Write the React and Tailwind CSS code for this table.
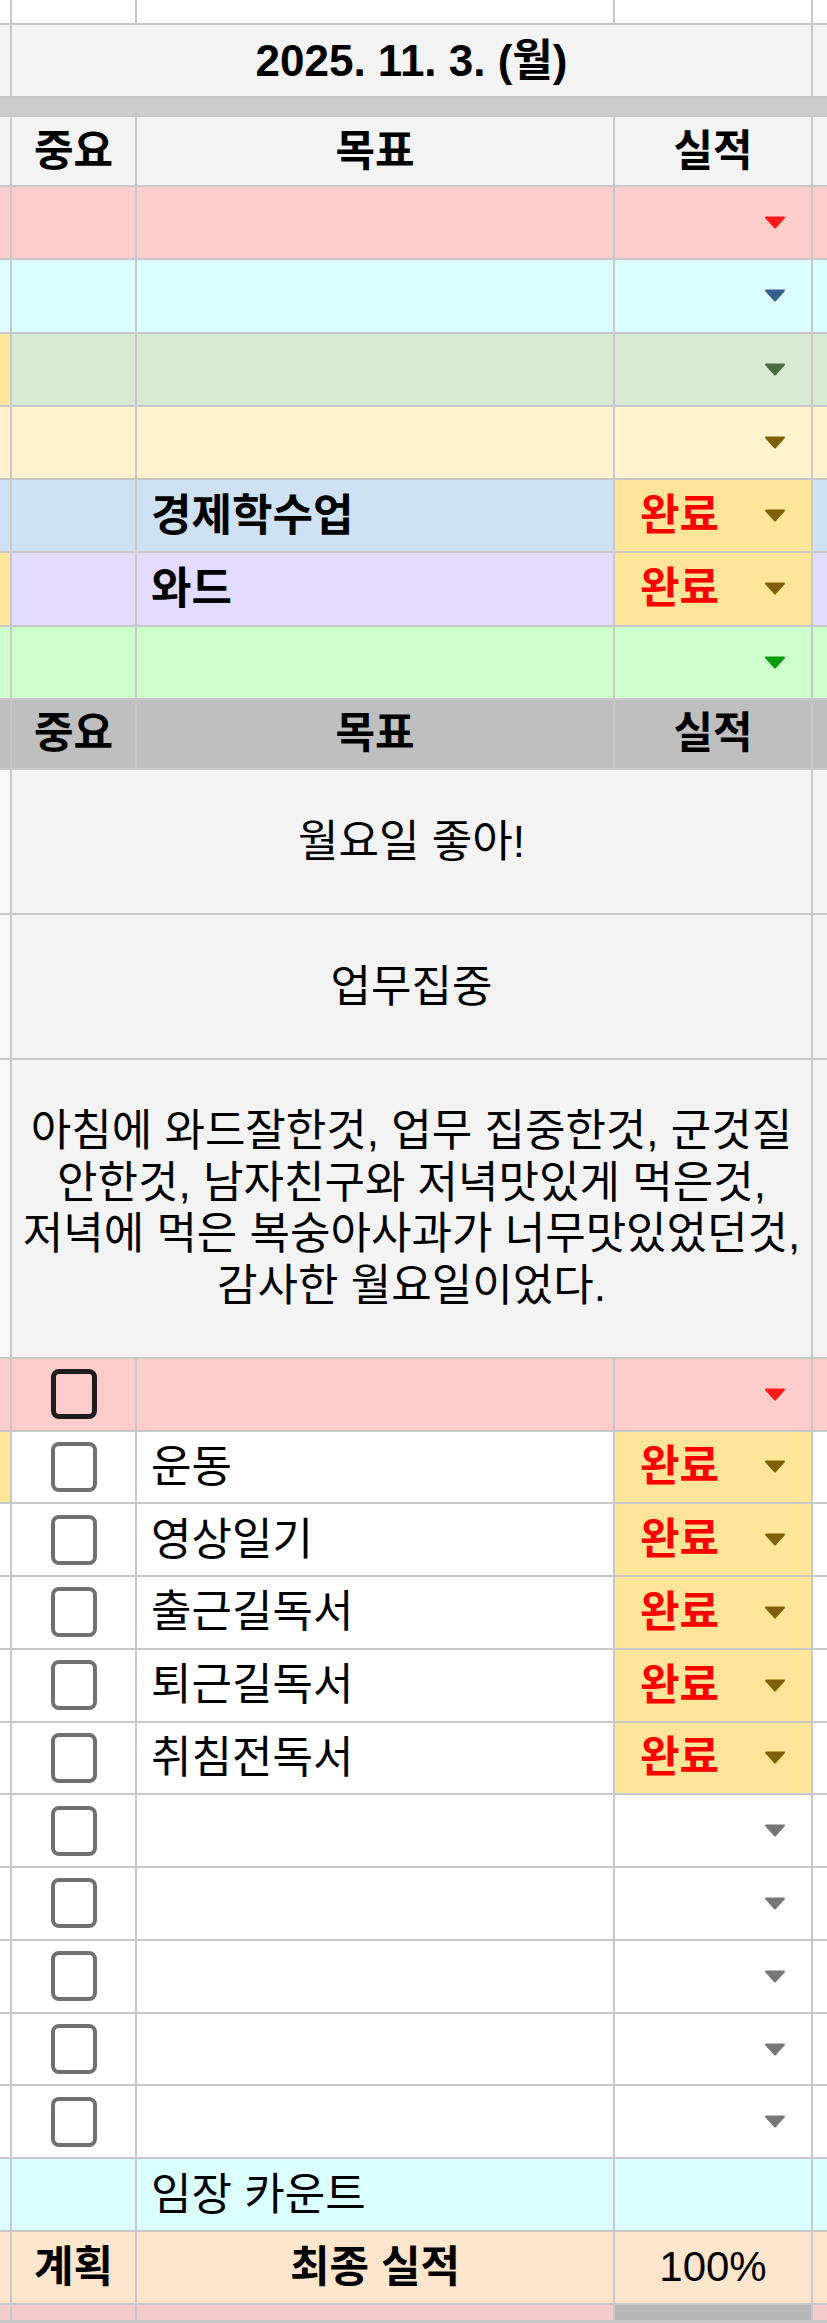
const GRID = 'grid grid-cols-[10px_123px_476px_196px_14px] gap-x-[2px]'

const goals = [
  { bg: 'bg-[#ffcccc]', arrow: '#ff1a1a' },
  { bg: 'bg-[#dbffff]', arrow: '#35608d' },
  { bg: 'bg-[#d9ead3]', side: 'bg-[#ffe599]', arrow: '#4b6b43' },
  { bg: 'bg-[#fff2cc]', arrow: '#7f6000' },
  { bg: 'bg-[#cfe2f3]', text: '경제학수업', bold: true, done: true },
  { bg: 'bg-[#e3dcff]', side: 'bg-[#ffe599]', text: '와드', bold: true, done: true },
  { bg: 'bg-[#ccffcc]', arrow: '#0a9a0a' },
]

const habits = [
  { bg: 'bg-[#ffcccc]', arrow: '#ff1a1a', dark: true },
  { bg: 'bg-white', side: 'bg-[#ffe599]', text: '운동', done: true },
  { bg: 'bg-white', text: '영상일기', done: true },
  { bg: 'bg-white', text: '출근길독서', done: true },
  { bg: 'bg-white', text: '퇴근길독서', done: true },
  { bg: 'bg-white', text: '취침전독서', done: true },
  { bg: 'bg-white', arrow: '#777777' },
  { bg: 'bg-white', arrow: '#777777' },
  { bg: 'bg-white', arrow: '#777777' },
  { bg: 'bg-white', arrow: '#777777' },
  { bg: 'bg-white', arrow: '#777777' },
]

function Caret({ color }) {
  return (
    <svg width="22" height="13" viewBox="0 0 22 13" className="shrink-0">
      <path d="M2 1.5h18L11 11.5z" fill={color} stroke={color} strokeWidth="2" strokeLinejoin="round" />
    </svg>
  )
}

function Status({ done, arrow, bg }) {
  return (
    <div className={`flex items-center justify-between pl-[25px] pr-[25px] ${done ? 'bg-[#ffe599]' : bg}`}>
      <span className="text-[43px] leading-none font-bold text-[#ff0000]">{done ? '완료' : ''}</span>
      <Caret color={done ? '#7f6000' : arrow} />
    </div>
  )
}

function Box({ dark }) {
  if (dark) {
    return <span className="w-[46px] h-[50px] rounded-[8px] border-[5px] border-[#1c1c1c]" />
  }
  return <span className="w-[46px] h-[50px] rounded-[8px] border-[4px] border-[#707070] bg-white" />
}

function Header({ bg }) {
  return (
    <div className={`${GRID} h-[68px] text-[43px] leading-none font-bold`}>
      <div className={bg} />
      <div className={`${bg} flex items-center justify-center`}>중요</div>
      <div className={`${bg} flex items-center justify-center`}>목표</div>
      <div className={`${bg} flex items-center justify-center`}>실적</div>
      <div className={bg} />
    </div>
  )
}

function GoalRow({ bg, side, text, bold, done, arrow }) {
  return (
    <div className={`${GRID} h-[71.25px]`}>
      <div className={side ?? bg} />
      <div className={bg} />
      <div className={`${bg} flex items-center pl-[14px] text-[44px] leading-none ${bold ? 'font-bold' : ''}`}>{text}</div>
      <Status done={done} arrow={arrow} bg={bg} />
      <div className={bg} />
    </div>
  )
}

function HabitRow({ bg, side, text, done, arrow, dark }) {
  return (
    <div className={`${GRID} h-[70.77px]`}>
      <div className={side ?? bg} />
      <div className={`${bg} flex items-center justify-center`}>
        <Box dark={dark} />
      </div>
      <div className={`${bg} flex items-center pl-[14px] text-[44px] leading-none`}>{text}</div>
      <Status done={done} arrow={arrow} bg={bg} />
      <div className={bg} />
    </div>
  )
}

function Note({ h, children }) {
  return (
    <div className={`${GRID} ${h}`}>
      <div className="bg-[#f8f8f8]" />
      <div className="col-span-3 bg-[#f3f3f3] flex flex-col items-center justify-center text-[44px] leading-[51.5px] text-center">
        {children}
      </div>
      <div className="bg-[#f3f3f3]" />
    </div>
  )
}

export default function App() {
  return (
    <div className="w-[827px] h-[2323px] overflow-hidden flex flex-col gap-y-[2px] bg-[#c8c8c8] text-black font-['Liberation_Sans','Noto_Sans_CJK_KR',sans-serif]">
      <div className={`${GRID} h-[23px]`}>
        <div className="bg-white" />
        <div className="bg-white" />
        <div className="bg-white" />
        <div className="bg-white" />
        <div className="bg-white" />
      </div>

      <div className={`${GRID} h-[71px]`}>
        <div className="bg-[#f3f3f3]" />
        <div className="col-span-3 bg-[#f3f3f3] flex items-center justify-center text-[44px] leading-none font-bold">
          2025. 11. 3. (월)
        </div>
        <div className="bg-[#f3f3f3]" />
      </div>

      <div className="h-[17px] bg-[#cccccc]" />

      <Header bg="bg-[#f3f3f3]" />

      {goals.map((g, i) => (
        <GoalRow key={i} {...g} />
      ))}

      <Header bg="bg-[#bfbfbf]" />

      <Note h="h-[143px]">월요일 좋아!</Note>
      <Note h="h-[143px]">업무집중</Note>
      <Note h="h-[297px]">
        <span className="whitespace-nowrap">아침에 와드잘한것, 업무 집중한것, 군것질</span>
        <span className="whitespace-nowrap">안한것, 남자친구와 저녁맛있게 먹은것,</span>
        <span className="whitespace-nowrap">저녁에 먹은 복숭아사과가 너무맛있었던것,</span>
        <span className="whitespace-nowrap">감사한 월요일이었다.</span>
      </Note>

      {habits.map((h, i) => (
        <HabitRow key={i} {...h} />
      ))}

      <div className={`${GRID} h-[70.77px]`}>
        <div className="bg-[#dbffff]" />
        <div className="bg-[#dbffff]" />
        <div className="bg-[#dbffff] flex items-center pl-[14px] text-[44px] leading-none">임장 카운트</div>
        <div className="bg-[#dbffff]" />
        <div className="bg-[#dbffff]" />
      </div>

      <div className={`${GRID} h-[70.77px] text-[43px] leading-none`}>
        <div className="bg-[#fce5cd]" />
        <div className="bg-[#fce5cd] flex items-center justify-center font-bold">계획</div>
        <div className="bg-[#fce5cd] flex items-center justify-center font-bold">최종 실적</div>
        <div className="bg-[#fce5cd] flex items-center justify-center text-[42px]">100%</div>
        <div className="bg-[#fce5cd]" />
      </div>

      <div className={`${GRID} h-[15px]`}>
        <div className="bg-[#f4cccc]" />
        <div className="bg-[#f4cccc]" />
        <div className="bg-[#f4cccc]" />
        <div className="bg-[#b7b7b7]" />
        <div className="bg-[#f4cccc]" />
      </div>
    </div>
  )
}
